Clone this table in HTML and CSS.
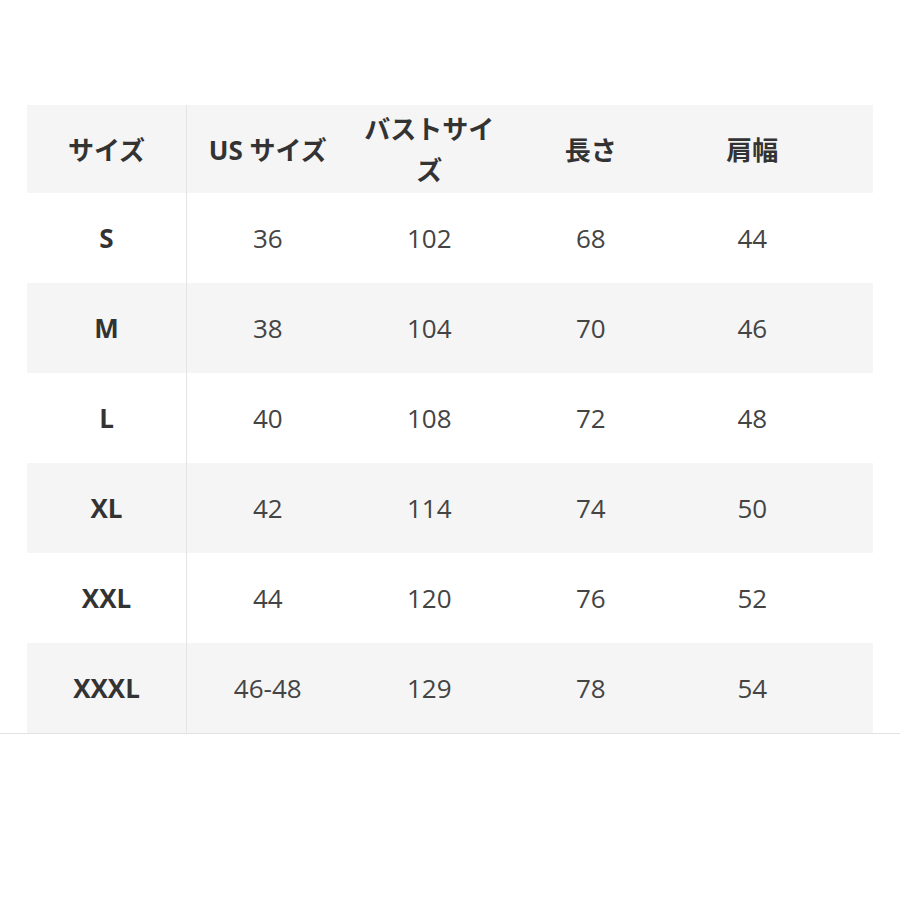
FILE: index.html
```html
<!DOCTYPE html>
<html lang="ja">
<head>
<meta charset="utf-8">
<link rel="stylesheet" href="styles.css">
</head>
<body>
<div class="page">
  <div class="wrap">
    <div class="table">
      <div class="row head">
        <div class="cell first">サイズ</div>
        <div class="cell">US サイズ</div>
        <div class="cell">バストサイズ</div>
        <div class="cell">長さ</div>
        <div class="cell">肩幅</div>
        <div class="cell pad"></div>
      </div>
      <div class="row">
        <div class="cell first">S</div>
        <div class="cell">36</div>
        <div class="cell">102</div>
        <div class="cell">68</div>
        <div class="cell">44</div>
        <div class="cell pad"></div>
      </div>
      <div class="row alt">
        <div class="cell first">M</div>
        <div class="cell">38</div>
        <div class="cell">104</div>
        <div class="cell">70</div>
        <div class="cell">46</div>
        <div class="cell pad"></div>
      </div>
      <div class="row">
        <div class="cell first">L</div>
        <div class="cell">40</div>
        <div class="cell">108</div>
        <div class="cell">72</div>
        <div class="cell">48</div>
        <div class="cell pad"></div>
      </div>
      <div class="row alt">
        <div class="cell first">XL</div>
        <div class="cell">42</div>
        <div class="cell">114</div>
        <div class="cell">74</div>
        <div class="cell">50</div>
        <div class="cell pad"></div>
      </div>
      <div class="row">
        <div class="cell first">XXL</div>
        <div class="cell">44</div>
        <div class="cell">120</div>
        <div class="cell">76</div>
        <div class="cell">52</div>
        <div class="cell pad"></div>
      </div>
      <div class="row alt">
        <div class="cell first">XXXL</div>
        <div class="cell">46-48</div>
        <div class="cell">129</div>
        <div class="cell">78</div>
        <div class="cell">54</div>
        <div class="cell pad"></div>
      </div>
    </div>
  </div>
</div>
</body>
</html>
```

FILE: styles.css
```css
html, body {
  margin: 0;
  padding: 0;
  background: #ffffff;
}
.page {
  padding-top: 105px;
  font-family: "Open Sans", "Noto Sans CJK JP", sans-serif;
  font-size: 26px;
  color: #444444;
}
.wrap {
  border-bottom: 1px solid #e2e2e2;
}
.table {
  margin: 0 27px;
  display: flex;
  flex-direction: column;
}
.row {
  display: grid;
  grid-template-columns: 160px repeat(4, 161.5px) 1fr;
  height: 90px;
}
.row.head {
  height: 88px;
  background: #f5f5f5;
  color: #333333;
  font-weight: 700;
}
.row.alt {
  background: #f5f5f5;
}
.cell {
  display: flex;
  align-items: center;
  justify-content: center;
  text-align: center;
  padding: 0 8px;
  line-height: 41px;
}
.cell.first {
  border-right: 1px solid #e4e4e4;
  font-weight: 700;
  color: #333333;
}
.head .cell {
  padding-top: 2px;
}
```
